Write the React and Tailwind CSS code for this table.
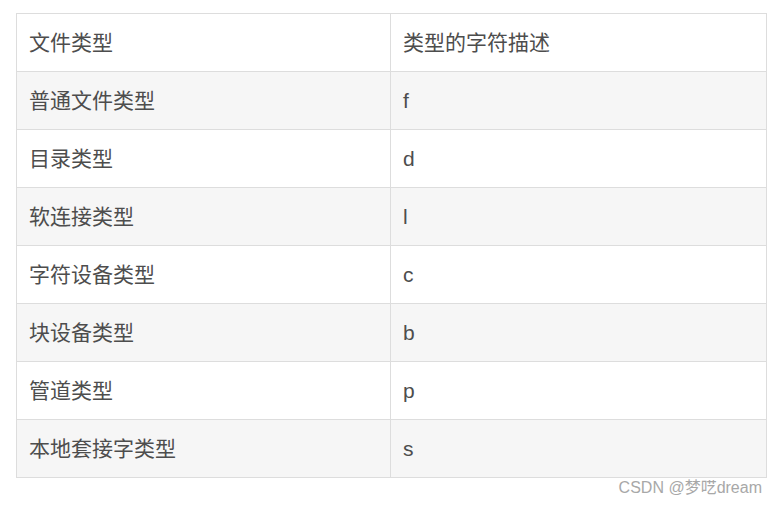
import React from 'react';

const rows = [
  ['文件类型', '类型的字符描述'],
  ['普通文件类型', 'f'],
  ['目录类型', 'd'],
  ['软连接类型', 'l'],
  ['字符设备类型', 'c'],
  ['块设备类型', 'b'],
  ['管道类型', 'p'],
  ['本地套接字类型', 's'],
];

export default function App() {
  return (
    <div
      className="w-[776px] h-[505px] bg-white relative"
      style={{ fontFamily: '"Liberation Sans", Arial, "Noto Sans CJK SC", sans-serif' }}
    >
      <div className="pt-[13px] pl-[16px]">
        <table className="w-[750px] border-collapse text-[21px] text-[#4d4d4d] table-fixed">
          <colgroup>
            <col className="w-[374px]" />
            <col className="w-[376px]" />
          </colgroup>
          <tbody>
            {rows.map((r, i) => (
              <tr key={i} className={i % 2 === 1 ? 'bg-[#f6f6f6]' : 'bg-white'}>
                <td className="h-[58px] border border-[#dddddd] px-[12px] align-middle">{r[0]}</td>
                <td className="h-[58px] border border-[#dddddd] px-[12px] align-middle">{r[1]}</td>
              </tr>
            ))}
          </tbody>
        </table>
      </div>
      <div className="absolute right-[14px] top-[477px] text-[16px] text-[#a8a8a8] leading-[22px]">
        CSDN @梦呓dream
      </div>
    </div>
  );
}
